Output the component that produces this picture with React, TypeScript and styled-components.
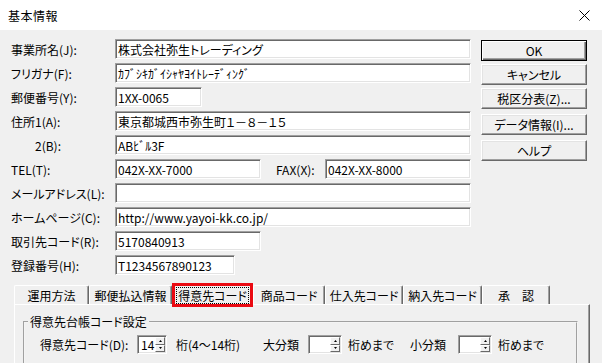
import React from 'react';
import styled, { createGlobalStyle } from 'styled-components';

const GlobalStyle = createGlobalStyle`
  html, body {
    margin: 0;
    padding: 0;
    background: #f0f0f0;
  }
  body {
    font-family: "Noto Sans CJK JP", "Liberation Sans", sans-serif;
    font-size: 12px;
    color: #000;
    font-feature-settings: "palt";
  }
`;

const Window = styled.div`
  width: 602px;
  height: 363px;
  overflow: hidden;
  background: #f0f0f0;
`;

const TitleBar = styled.div`
  height: 30px;
  background: #fff;
  display: flex;
  align-items: center;
  justify-content: space-between;
  padding: 0 12px 0 8px;
  box-sizing: border-box;
`;

const Title = styled.span`
  font-size: 12px;
  letter-spacing: 0.5px;
`;

const Main = styled.div`
  display: flex;
  padding: 9px 0 0 11px;
`;

const Form = styled.div`
  display: flex;
  flex-direction: column;
  gap: 4px;
  width: 460px;
`;

const Row = styled.div`
  display: flex;
  align-items: center;
  height: 20px;
`;

const Label = styled.span<{ $w?: number; $indent?: number }>`
  width: ${({ $w }) => $w ?? 104}px;
  padding-left: ${({ $indent }) => $indent ?? 0}px;
  box-sizing: border-box;
  white-space: nowrap;
`;

const Field = styled.div<{ $w: number }>`
  width: ${({ $w }) => $w}px;
  height: 20px;
  box-sizing: border-box;
  background: #fff;
  border: 1px solid;
  border-color: #a0a0a0 #fff #fff #a0a0a0;
  box-shadow: inset 1px 1px #696969, inset -1px -1px #e3e3e3;
  padding: 0 2px;
  display: flex;
  align-items: center;
  white-space: nowrap;
  overflow: hidden;
`;

const Buttons = styled.div`
  display: flex;
  flex-direction: column;
  margin-left: 10px;
  width: 106px;
  padding-top: 1px;
`;

const Btn = styled.button<{ $default?: boolean; $mt?: number }>`
  height: 21px;
  margin-top: ${({ $mt }) => $mt ?? 0}px;
  padding: 0;
  font: inherit;
  color: #000;
  background: #f0f0f0;
  box-sizing: border-box;
  border: 1px solid;
  border-color: ${({ $default }) =>
    $default ? '#000' : '#fff #696969 #696969 #fff'};
  box-shadow: ${({ $default }) =>
    $default
      ? 'inset 1px 1px #fff, inset -1px -1px #696969, inset -2px -2px #a0a0a0'
      : 'inset -1px -1px #a0a0a0, inset 1px 1px #e3e3e3'};
`;

const TabArea = styled.div`
  margin: 8px 0 0 14px;
  width: 576px;
`;

const TabStrip = styled.div`
  display: flex;
  align-items: flex-end;
  height: 21px;
  position: relative;
  z-index: 1;
`;

const Tab = styled.div<{ $w: number }>`
  width: ${({ $w }) => $w}px;
  height: 19px;
  box-sizing: border-box;
  border-top: 1px solid #fff;
  border-left: 1px solid #fff;
  border-right: 1px solid #696969;
  box-shadow: inset -1px 0 #a0a0a0;
  border-radius: 2px 2px 0 0;
  display: flex;
  align-items: center;
  justify-content: center;
  white-space: nowrap;
`;

const ActiveTab = styled(Tab)`
  height: 24px;
  margin-bottom: -3px;
  border: 3px solid #ea0a12;
  border-radius: 0;
  box-shadow: none;
  background: #f0f0f0;
`;

const Focus = styled.span`
  outline: 1px dotted #000;
  outline-offset: 0;
  padding: 0 1px;
  line-height: 15px;
`;

const Panel = styled.div`
  height: 80px;
  border-top: 1px solid #fff;
  border-left: 1px solid #fff;
  border-right: 1px solid #696969;
  box-shadow: inset -1px 0 #a0a0a0;
  padding: 8px 11px 0 8px;
`;

const Group = styled.fieldset`
  margin: 0;
  padding: 5px 0 20px 0;
  border: 2px groove #f4f4f4;
  min-inline-size: 0;
`;

const Legend = styled.legend`
  margin-left: 3px;
  padding: 0 2px;
  line-height: 17px;
`;

const SpinRow = styled.div`
  display: flex;
  align-items: center;
  height: 19px;
  padding-left: 15px;
`;

const Cell = styled.span<{ $w?: number; $ml?: number }>`
  width: ${({ $w }) => ($w ? `${$w}px` : 'auto')};
  margin-left: ${({ $ml }) => $ml ?? 0}px;
  white-space: nowrap;
`;

const Spin = styled.div<{ $w: number }>`
  width: ${({ $w }) => $w}px;
  height: 19px;
  box-sizing: border-box;
  display: flex;
  background: #fff;
  border: 1px solid;
  border-color: #a0a0a0 #fff #fff #a0a0a0;
  box-shadow: inset 1px 1px #696969, inset -1px -1px #e3e3e3;
`;

const SpinText = styled.span`
  flex: 1;
  padding: 1px 0 0 3px;
  line-height: 16px;
`;

const SpinButtons = styled.div`
  width: 10px;
  display: flex;
  flex-direction: column;
  margin: 1px 1px 1px 0;
`;

const SpinBtn = styled.div`
  flex: 1;
  background: #f0f0f0;
  box-sizing: border-box;
  border: 1px solid;
  border-color: #fff #696969 #696969 #fff;
  display: flex;
  align-items: center;
  justify-content: center;
`;

const Arrow = ({ up }: { up?: boolean }) => (
  <svg width="3" height="2" viewBox="0 0 3 2">
    <polygon points={up ? '1.5,0 3,2 0,2' : '0,0 3,0 1.5,2'} fill="#000" />
  </svg>
);

const Spinner = ({ w, value }: { w: number; value?: string }) => (
  <Spin $w={w}>
    <SpinText>{value}</SpinText>
    <SpinButtons>
      <SpinBtn>
        <Arrow up />
      </SpinBtn>
      <SpinBtn>
        <Arrow />
      </SpinBtn>
    </SpinButtons>
  </Spin>
);

const CloseIcon = () => (
  <svg width="11" height="11" viewBox="0 0 11 11">
    <path d="M0.5 0.5 L10.5 10.5 M10.5 0.5 L0.5 10.5" stroke="#000" strokeWidth="1" />
  </svg>
);

const tabs = [
  { label: '運用方法', w: 75 },
  { label: '郵便払込情報', w: 83 },
  { label: '得意先コード', w: 81, active: true },
  { label: '商品コード', w: 72 },
  { label: '仕入先コード', w: 78 },
  { label: '納入先コード', w: 79 },
  { label: '承　認', w: 68 },
];

export default function App() {
  return (
    <Window>
      <GlobalStyle />
      <TitleBar>
        <Title>基本情報</Title>
        <CloseIcon />
      </TitleBar>
      <Main>
        <Form>
          <Row>
            <Label>事業所名(J):</Label>
            <Field $w={356}>株式会社弥生トレーディング</Field>
          </Row>
          <Row>
            <Label>フリガナ(F):</Label>
            <Field $w={356}>ｶﾌﾞｼｷｶﾞｲｼｬﾔﾖｲﾄﾚｰﾃﾞｨﾝｸﾞ</Field>
          </Row>
          <Row>
            <Label>郵便番号(Y):</Label>
            <Field $w={87}>1XX-0065</Field>
          </Row>
          <Row>
            <Label>住所1(A):</Label>
            <Field $w={356}>東京都城西市弥生町１－８－１５</Field>
          </Row>
          <Row>
            <Label $indent={24}>2(B):</Label>
            <Field $w={356}>ABﾋﾞﾙ3F</Field>
          </Row>
          <Row>
            <Label>TEL(T):</Label>
            <Field $w={146}>042X-XX-7000</Field>
            <Label $w={64} $indent={15}>FAX(X):</Label>
            <Field $w={146}>042X-XX-8000</Field>
          </Row>
          <Row>
            <Label>メールアドレス(L):</Label>
            <Field $w={356} />
          </Row>
          <Row>
            <Label>ホームページ(C):</Label>
            <Field $w={356}>http://www.yayoi-kk.co.jp/</Field>
          </Row>
          <Row>
            <Label>取引先コード(R):</Label>
            <Field $w={146}>5170840913</Field>
          </Row>
          <Row>
            <Label>登録番号(H):</Label>
            <Field $w={120}>T1234567890123</Field>
          </Row>
        </Form>
        <Buttons>
          <Btn $default>OK</Btn>
          <Btn $mt={3}>キャンセル</Btn>
          <Btn $mt={3}>税区分表(Z)...</Btn>
          <Btn $mt={5}>データ情報(I)...</Btn>
          <Btn $mt={5}>ヘルプ</Btn>
        </Buttons>
      </Main>
      <TabArea>
        <TabStrip>
          {tabs.map((t) =>
            t.active ? (
              <ActiveTab key={t.label} $w={t.w}>
                <Focus>{t.label}</Focus>
              </ActiveTab>
            ) : (
              <Tab key={t.label} $w={t.w}>
                {t.label}
              </Tab>
            ),
          )}
        </TabStrip>
        <Panel>
          <Group>
            <Legend>得意先台帳コード設定</Legend>
            <SpinRow>
              <Cell $w={97}>得意先コード(D):</Cell>
              <Spinner w={30} value="14" />
              <Cell $w={87} $ml={9}>桁(4～14桁)</Cell>
              <Cell $w={45}>大分類</Cell>
              <Spinner w={34} />
              <Cell $w={62} $ml={6}>桁めまで</Cell>
              <Cell $w={48}>小分類</Cell>
              <Spinner w={34} />
              <Cell $ml={6}>桁めまで</Cell>
            </SpinRow>
          </Group>
        </Panel>
      </TabArea>
    </Window>
  );
}
